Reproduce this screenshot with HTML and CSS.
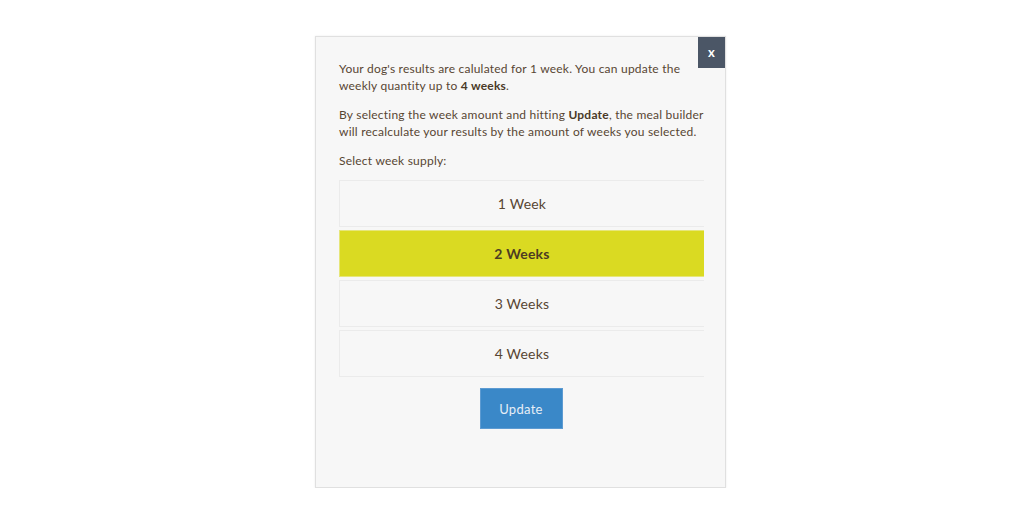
FILE: index.html
```html
<!DOCTYPE html>
<html lang="en">
<head>
<meta charset="utf-8">
<title>Week supply</title>
<link rel="stylesheet" href="styles.css">
</head>
<body>
<div class="modal">
  <button class="close">x</button>
  <p class="txt">Your dog's results are calulated for 1 week. You can update the weekly quantity up to <b>4 weeks</b>.</p>
  <p class="txt">By selecting the week amount and hitting <b>Update</b>, the meal builder will recalculate your results by the amount of weeks you selected.</p>
  <p class="txt label">Select week supply:</p>
  <div class="options">
    <div class="opt">1 Week</div>
    <div class="opt active">2 Weeks</div>
    <div class="opt">3 Weeks</div>
    <div class="opt">4 Weeks</div>
  </div>
  <div class="actions"><button class="update">Update</button></div>
</div>
</body>
</html>
```
FILE: styles.css
```css
html, body { margin: 0; padding: 0; background: #ffffff; }
body { font-family: Lato, "Open Sans", sans-serif; color: #574633; }
.modal {
  position: relative;
  box-sizing: border-box;
  width: 411px;
  height: 452px;
  margin: 36px 0 0 315px;
  background: #f7f7f7;
  border: 1px solid #e0e0e0;
  box-shadow: 0 0 2px rgba(0,0,0,0.08);
  padding: 23px 17px 0 23px;
}
.close {
  position: absolute;
  top: 0; right: 0;
  width: 27px; height: 31px;
  border: 0; margin: 0; padding: 0;
  background: #4b5666;
  color: #ffffff;
  font: 700 13px Lato, sans-serif;
  line-height: 31px;
}
.txt {
  margin: 0 0 12px;
  font-size: 12px;
  line-height: 17px;
  letter-spacing: 0.22px;
}
.txt b { font-weight: 700; color: #4a3a28; }
.label { margin-bottom: 11px; }
.options { display: flex; flex-direction: column; gap: 3px; margin-right: 4px; }
.opt {
  height: 45px;
  border: 1px solid #ebebeb;
  border-right: 0;
  display: flex; align-items: center; justify-content: center;
  padding-bottom: 1px;
  box-sizing: content-box;
  height: 44px;
  font-size: 14px;
  color: #574633;
  letter-spacing: 0.2px;
}
.opt.active {
  background: #dada22;
  border-color: #e6e67a;
  font-weight: 700;
  color: #4d3c22;
}
.actions { display: flex; justify-content: center; padding-top: 11px; margin-right: 4px; }
.update {
  width: 83px; height: 41px;
  border: 1px solid #5d9bd2;
  background: #3a88c8;
  color: #e6eef6;
  font: 400 13px Lato, sans-serif;
  letter-spacing: 0.3px;
  margin-right: 1px;
}
```
